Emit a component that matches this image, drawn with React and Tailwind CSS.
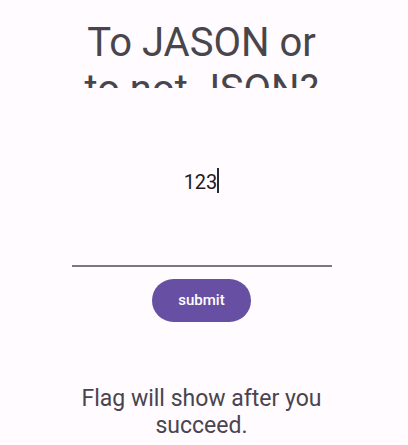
export default function App() {
    return (
        <div
            className="min-h-[445px] w-full bg-[#fffbfe] flex flex-col items-center pr-[5px]"
            style={{ fontFamily: "Roboto, 'Noto Sans', sans-serif" }}
        >
            <div className="h-[88px] w-full overflow-hidden flex justify-center pt-[19px]">
                <h1 className="w-[260px] text-center text-[40px] leading-[47px] text-[#48464c]">
                    To JASON or to not JSON?
                </h1>
            </div>
            <div className="mt-[82px] w-[260px] h-[97px] border-b-2 border-[#7b7680] flex justify-center">
                <div className="flex items-start h-[24px]">
                    <span className="text-[20px] leading-[24px] text-[#1d1b20]">
                        123
                    </span>
                    <span className="w-[2px] h-[25px] -mt-[2px] bg-[#2a2a2e]" />
                </div>
            </div>
            <button
                type="button"
                className="mt-[12px] w-[99px] h-[43px] rounded-full bg-[#6750a4] text-white text-[15px] font-medium"
            >
                submit
            </button>
            <p className="mt-[63px] w-[260px] text-center text-[23px] leading-[27px] text-[#49454f]">
                Flag will show after you succeed.
            </p>
        </div>
    );
}
